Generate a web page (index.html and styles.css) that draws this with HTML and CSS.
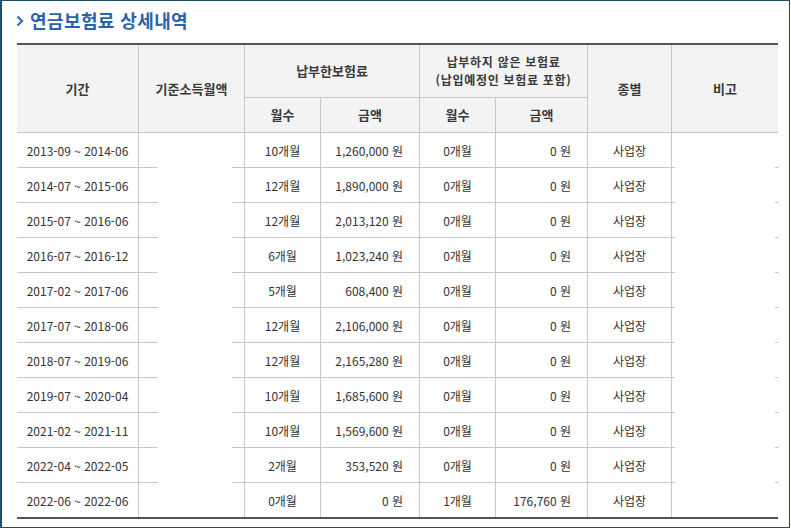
FILE: index.html
```html
<!DOCTYPE html>
<html lang="ko">
<head>
<meta charset="utf-8">
<title>연금보험료 상세내역</title>
<link rel="stylesheet" href="styles.css">
</head>
<body>
<div class="frame">
  <h2 class="title">
    <svg class="chev" width="8" height="12" viewBox="0 0 8 12" aria-hidden="true"><path d="M1.5 1.5 L6 6 L1.5 10.5" fill="none" stroke="#3a70c0" stroke-width="2.4"/></svg>
    <span>연금보험료 상세내역</span>
  </h2>
  <table class="grid">
    <colgroup>
      <col class="c-period"><col class="c-base"><col class="c-m"><col class="c-amt1"><col class="c-m"><col class="c-amt2"><col class="c-kind"><col class="c-note">
    </colgroup>
    <thead>
      <tr class="h1">
        <th rowspan="2" class="lead">기간</th>
        <th rowspan="2">기준소득월액</th>
        <th colspan="2">납부한보험료</th>
        <th colspan="2" class="two"><span class="ln">납부하지 않은 보험료</span><span class="ln">(납입예정인 보험료 포함)</span></th>
        <th rowspan="2">종별</th>
        <th rowspan="2">비고</th>
      </tr>
      <tr class="h2">
        <th>월수</th><th>금액</th><th>월수</th><th>금액</th>
      </tr>
    </thead>
    <tbody>
      <tr><td class="lead">2013-09 ~ 2014-06</td><td class="redact base"></td><td>10개월</td><td class="num">1,260,000 원</td><td>0개월</td><td class="num">0 원</td><td>사업장</td><td class="redact note"></td></tr>
      <tr><td class="lead">2014-07 ~ 2015-06</td><td class="redact base"></td><td>12개월</td><td class="num">1,890,000 원</td><td>0개월</td><td class="num">0 원</td><td>사업장</td><td class="redact note"></td></tr>
      <tr><td class="lead">2015-07 ~ 2016-06</td><td class="redact base"></td><td>12개월</td><td class="num">2,013,120 원</td><td>0개월</td><td class="num">0 원</td><td>사업장</td><td class="redact note"></td></tr>
      <tr><td class="lead">2016-07 ~ 2016-12</td><td class="redact base"></td><td>6개월</td><td class="num">1,023,240 원</td><td>0개월</td><td class="num">0 원</td><td>사업장</td><td class="redact note"></td></tr>
      <tr><td class="lead">2017-02 ~ 2017-06</td><td class="redact base"></td><td>5개월</td><td class="num">608,400 원</td><td>0개월</td><td class="num">0 원</td><td>사업장</td><td class="redact note"></td></tr>
      <tr><td class="lead">2017-07 ~ 2018-06</td><td class="redact base"></td><td>12개월</td><td class="num">2,106,000 원</td><td>0개월</td><td class="num">0 원</td><td>사업장</td><td class="redact note"></td></tr>
      <tr><td class="lead">2018-07 ~ 2019-06</td><td class="redact base"></td><td>12개월</td><td class="num">2,165,280 원</td><td>0개월</td><td class="num">0 원</td><td>사업장</td><td class="redact note"></td></tr>
      <tr><td class="lead">2019-07 ~ 2020-04</td><td class="redact base"></td><td>10개월</td><td class="num">1,685,600 원</td><td>0개월</td><td class="num">0 원</td><td>사업장</td><td class="redact note"></td></tr>
      <tr><td class="lead">2021-02 ~ 2021-11</td><td class="redact base"></td><td>10개월</td><td class="num">1,569,600 원</td><td>0개월</td><td class="num">0 원</td><td>사업장</td><td class="redact note"></td></tr>
      <tr><td class="lead">2022-04 ~ 2022-05</td><td class="redact base"></td><td>2개월</td><td class="num">353,520 원</td><td>0개월</td><td class="num">0 원</td><td>사업장</td><td class="redact note"></td></tr>
      <tr class="last"><td class="lead">2022-06 ~ 2022-06</td><td class="redact base"></td><td>0개월</td><td class="num">0 원</td><td>1개월</td><td class="num">176,760 원</td><td>사업장</td><td class="redact note"></td></tr>
    </tbody>
  </table>
</div>
</body>
</html>
```

FILE: styles.css
```css
html, body {
  margin: 0;
  padding: 0;
  background: #ffffff;
}

.frame {
  box-sizing: border-box;
  width: 790px;
  height: 528px;
  border: 1px solid #1f4f66;
  border-left-width: 2px;
  padding: 6px 0 0 14px;
  background: #ffffff;
  font-family: "Noto Sans CJK KR", "Noto Sans", sans-serif;
}

.title {
  margin: 0 0 10px 0;
  height: 26px;
  display: flex;
  align-items: center;
  gap: 6px;
  font-size: 18px;
  font-weight: 700;
  letter-spacing: 0.4px;
  color: #2b62ad;
}

.chev {
  display: block;
  margin-top: 2px;
}

.grid {
  margin-left: 1px;
  width: 761px;
  table-layout: fixed;
  border-collapse: separate;
  border-spacing: 0;
  border-top: 2px solid #555555;
  border-bottom: 2px solid #555555;
  font-size: 12px;
  color: #333333;
}

.c-period { width: 121px; }
.c-base { width: 106px; }
.c-m { width: 76px; }
.c-amt1 { width: 99px; }
.c-amt2 { width: 92px; }
.c-kind { width: 84px; }
.c-note { width: 107px; }

.grid th,
.grid td {
  padding: 0;
  border-left: 1px solid #c8c8c8;
  border-bottom: 1px solid #c8c8c8;
  text-align: center;
  vertical-align: middle;
  white-space: nowrap;
}

.grid .lead {
  border-left: none;
}

.grid th {
  background: #f3f3f3;
  font-size: 13px;
  font-weight: 700;
  color: #3a3a3a;
  line-height: 16px;
}

.grid th.two {
  font-size: 12px;
  letter-spacing: 0.7px;
}

.grid th.two .ln {
  display: block;
  line-height: 18px;
}

.h1 { height: 53px; }
.h2 { height: 35px; }
.grid tbody tr { height: 35px; }
.grid tbody tr.last { height: 34px; }
.grid tbody tr.last td { border-bottom: none; }

.grid td.num {
  text-align: right;
  padding-right: 16px;
}

.grid td.redact {
  border-bottom: none;
  background-origin: border-box;
  background-repeat: no-repeat;
}

.grid td.redact.base {
  background-image: linear-gradient(#c8c8c8, #c8c8c8), linear-gradient(#c8c8c8, #c8c8c8);
  background-size: 20px 1px, 12px 1px;
  background-position: left bottom, right bottom;
}

.grid td.redact.note {
  background-image: linear-gradient(#c8c8c8, #c8c8c8), linear-gradient(#c8c8c8, #c8c8c8);
  background-size: 4px 1px, 3px 1px;
  background-position: left bottom, right bottom;
}

.grid tbody tr.last td.redact {
  background-image: none;
}
```
